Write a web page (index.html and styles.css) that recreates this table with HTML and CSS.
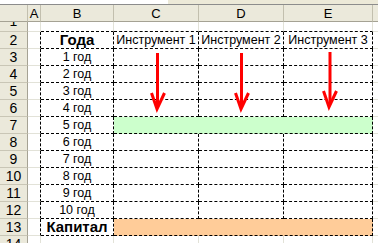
FILE: index.html
```html
<!DOCTYPE html>
<html>
<head>
<meta charset="utf-8">
<link rel="stylesheet" href="styles.css">
</head>
<body>
<div class="sheet">
  <div class="strip"><div class="namebox"></div></div>
  <div class="grid">
    <div class="corner"></div>
    <div class="ch">A</div>
    <div class="ch">B</div>
    <div class="ch">C</div>
    <div class="ch">D</div>
    <div class="ch">E</div>
    <div class="ch"></div>

    <div class="rh r1"><span>1</span></div>
    <div class="c"></div>
    <div class="c top"></div>
    <div class="c top"></div>
    <div class="c top"></div>
    <div class="c top"></div>
    <div class="c"></div>

    <div class="rh">2</div>
    <div class="c left"></div>
    <div class="t bold">Года</div>
    <div class="t">Инструмент 1</div>
    <div class="t">Инструмент 2</div>
    <div class="t">Инструмент 3</div>
    <div class="c"></div>

    <div class="rh">3</div>
    <div class="c left"></div>
    <div class="t">1 год</div>
    <div class="t"></div><div class="t"></div><div class="t"></div>
    <div class="c"></div>

    <div class="rh">4</div>
    <div class="c left"></div>
    <div class="t">2 год</div>
    <div class="t"></div><div class="t"></div><div class="t"></div>
    <div class="c"></div>

    <div class="rh">5</div>
    <div class="c left"></div>
    <div class="t">3 год</div>
    <div class="t"></div><div class="t"></div><div class="t"></div>
    <div class="c"></div>

    <div class="rh">6</div>
    <div class="c left"></div>
    <div class="t">4 год</div>
    <div class="t"></div><div class="t"></div><div class="t"></div>
    <div class="c"></div>

    <div class="rh">7</div>
    <div class="c left"></div>
    <div class="t">5 год</div>
    <div class="t span3 green"></div>
    <div class="c"></div>

    <div class="rh">8</div>
    <div class="c left"></div>
    <div class="t">6 год</div>
    <div class="t"></div><div class="t"></div><div class="t"></div>
    <div class="c"></div>

    <div class="rh">9</div>
    <div class="c left"></div>
    <div class="t">7 год</div>
    <div class="t"></div><div class="t"></div><div class="t"></div>
    <div class="c"></div>

    <div class="rh">10</div>
    <div class="c left"></div>
    <div class="t">8 год</div>
    <div class="t"></div><div class="t"></div><div class="t"></div>
    <div class="c"></div>

    <div class="rh">11</div>
    <div class="c left"></div>
    <div class="t">9 год</div>
    <div class="t"></div><div class="t"></div><div class="t"></div>
    <div class="c"></div>

    <div class="rh">12</div>
    <div class="c left"></div>
    <div class="t">10 год</div>
    <div class="t"></div><div class="t"></div><div class="t"></div>
    <div class="c"></div>

    <div class="rh">13</div>
    <div class="c left"></div>
    <div class="t bold">Капитал</div>
    <div class="t span3 orange"></div>
    <div class="c"></div>

    <div class="rh">14</div>
    <div class="c"></div>
    <div class="c"></div>
    <div class="c"></div>
    <div class="c"></div>
    <div class="c"></div>
    <div class="c"></div>
  </div>
  <svg class="arrows" width="378" height="243" viewBox="0 0 378 243">
    <g stroke="#ff0000" stroke-width="3" fill="none" stroke-linecap="butt" stroke-linejoin="miter">
      <path d="M157.5 53 V106"/>
      <path d="M151.5 93 L157 109 L164.5 93"/>
      <path d="M241.5 53 V106"/>
      <path d="M235.5 93 L241 109 L248.5 93"/>
      <path d="M330 52 V104"/>
      <path d="M323.5 91 L329 107 L336.5 91"/>
    </g>
  </svg>
</div>
</body>
</html>
```
FILE: styles.css
```css
html, body {
  margin: 0;
  padding: 0;
  background: #ffffff;
  overflow: hidden;
}
.sheet {
  position: relative;
  width: 378px;
  height: 243px;
  overflow: hidden;
  font-family: "Liberation Sans", Arial, sans-serif;
  color: #000;
}
.strip {
  height: 4px;
  background: #ece9d8;
  border-bottom: 1px solid #8c8c8c;
  display: flex;
}
.namebox {
  width: 168px;
  background: #ffffff;
}
.grid {
  display: grid;
  grid-template-columns: 28px 13px 73px 85px 85px 89px 64px;
  grid-template-rows: 17px 10px repeat(12, 17px) 17px;
}
.grid > div {
  box-sizing: border-box;
  overflow: hidden;
  white-space: nowrap;
}
.corner, .ch {
  background: #ebe9db;
  border-right: 1px solid #c2bfae;
  border-bottom: 1px solid #a5a294;
  font-size: 13px;
  line-height: 17px;
  text-align: center;
}
.rh {
  background: #ebe9db;
  border-right: 1px solid #a5a294;
  border-bottom: 1px solid #c9c6b6;
  font-size: 14px;
  line-height: 17px;
  text-align: center;
}
.r1 span {
  display: block;
  margin-top: -9px;
}
.c {
  border-right: 1px solid #e2e2d8;
  border-bottom: 1px solid #e2e2d8;
}
.c.top {
  border-bottom: 1px dashed #000;
}
.c.left {
  border-right: 1px dashed #000;
}
.t {
  border-right: 1px dashed #000;
  border-bottom: 1px dashed #000;
  font-size: 12.5px;
  line-height: 17.5px;
  text-align: center;
}
.t.bold {
  font-weight: bold;
  font-size: 15px;
  line-height: 16px;
}
.span3 {
  grid-column: span 3;
}
.green {
  background: #ccffcc;
}
.orange {
  background: #ffcc99;
}
.arrows {
  position: absolute;
  left: 0;
  top: 0;
  pointer-events: none;
}
```
